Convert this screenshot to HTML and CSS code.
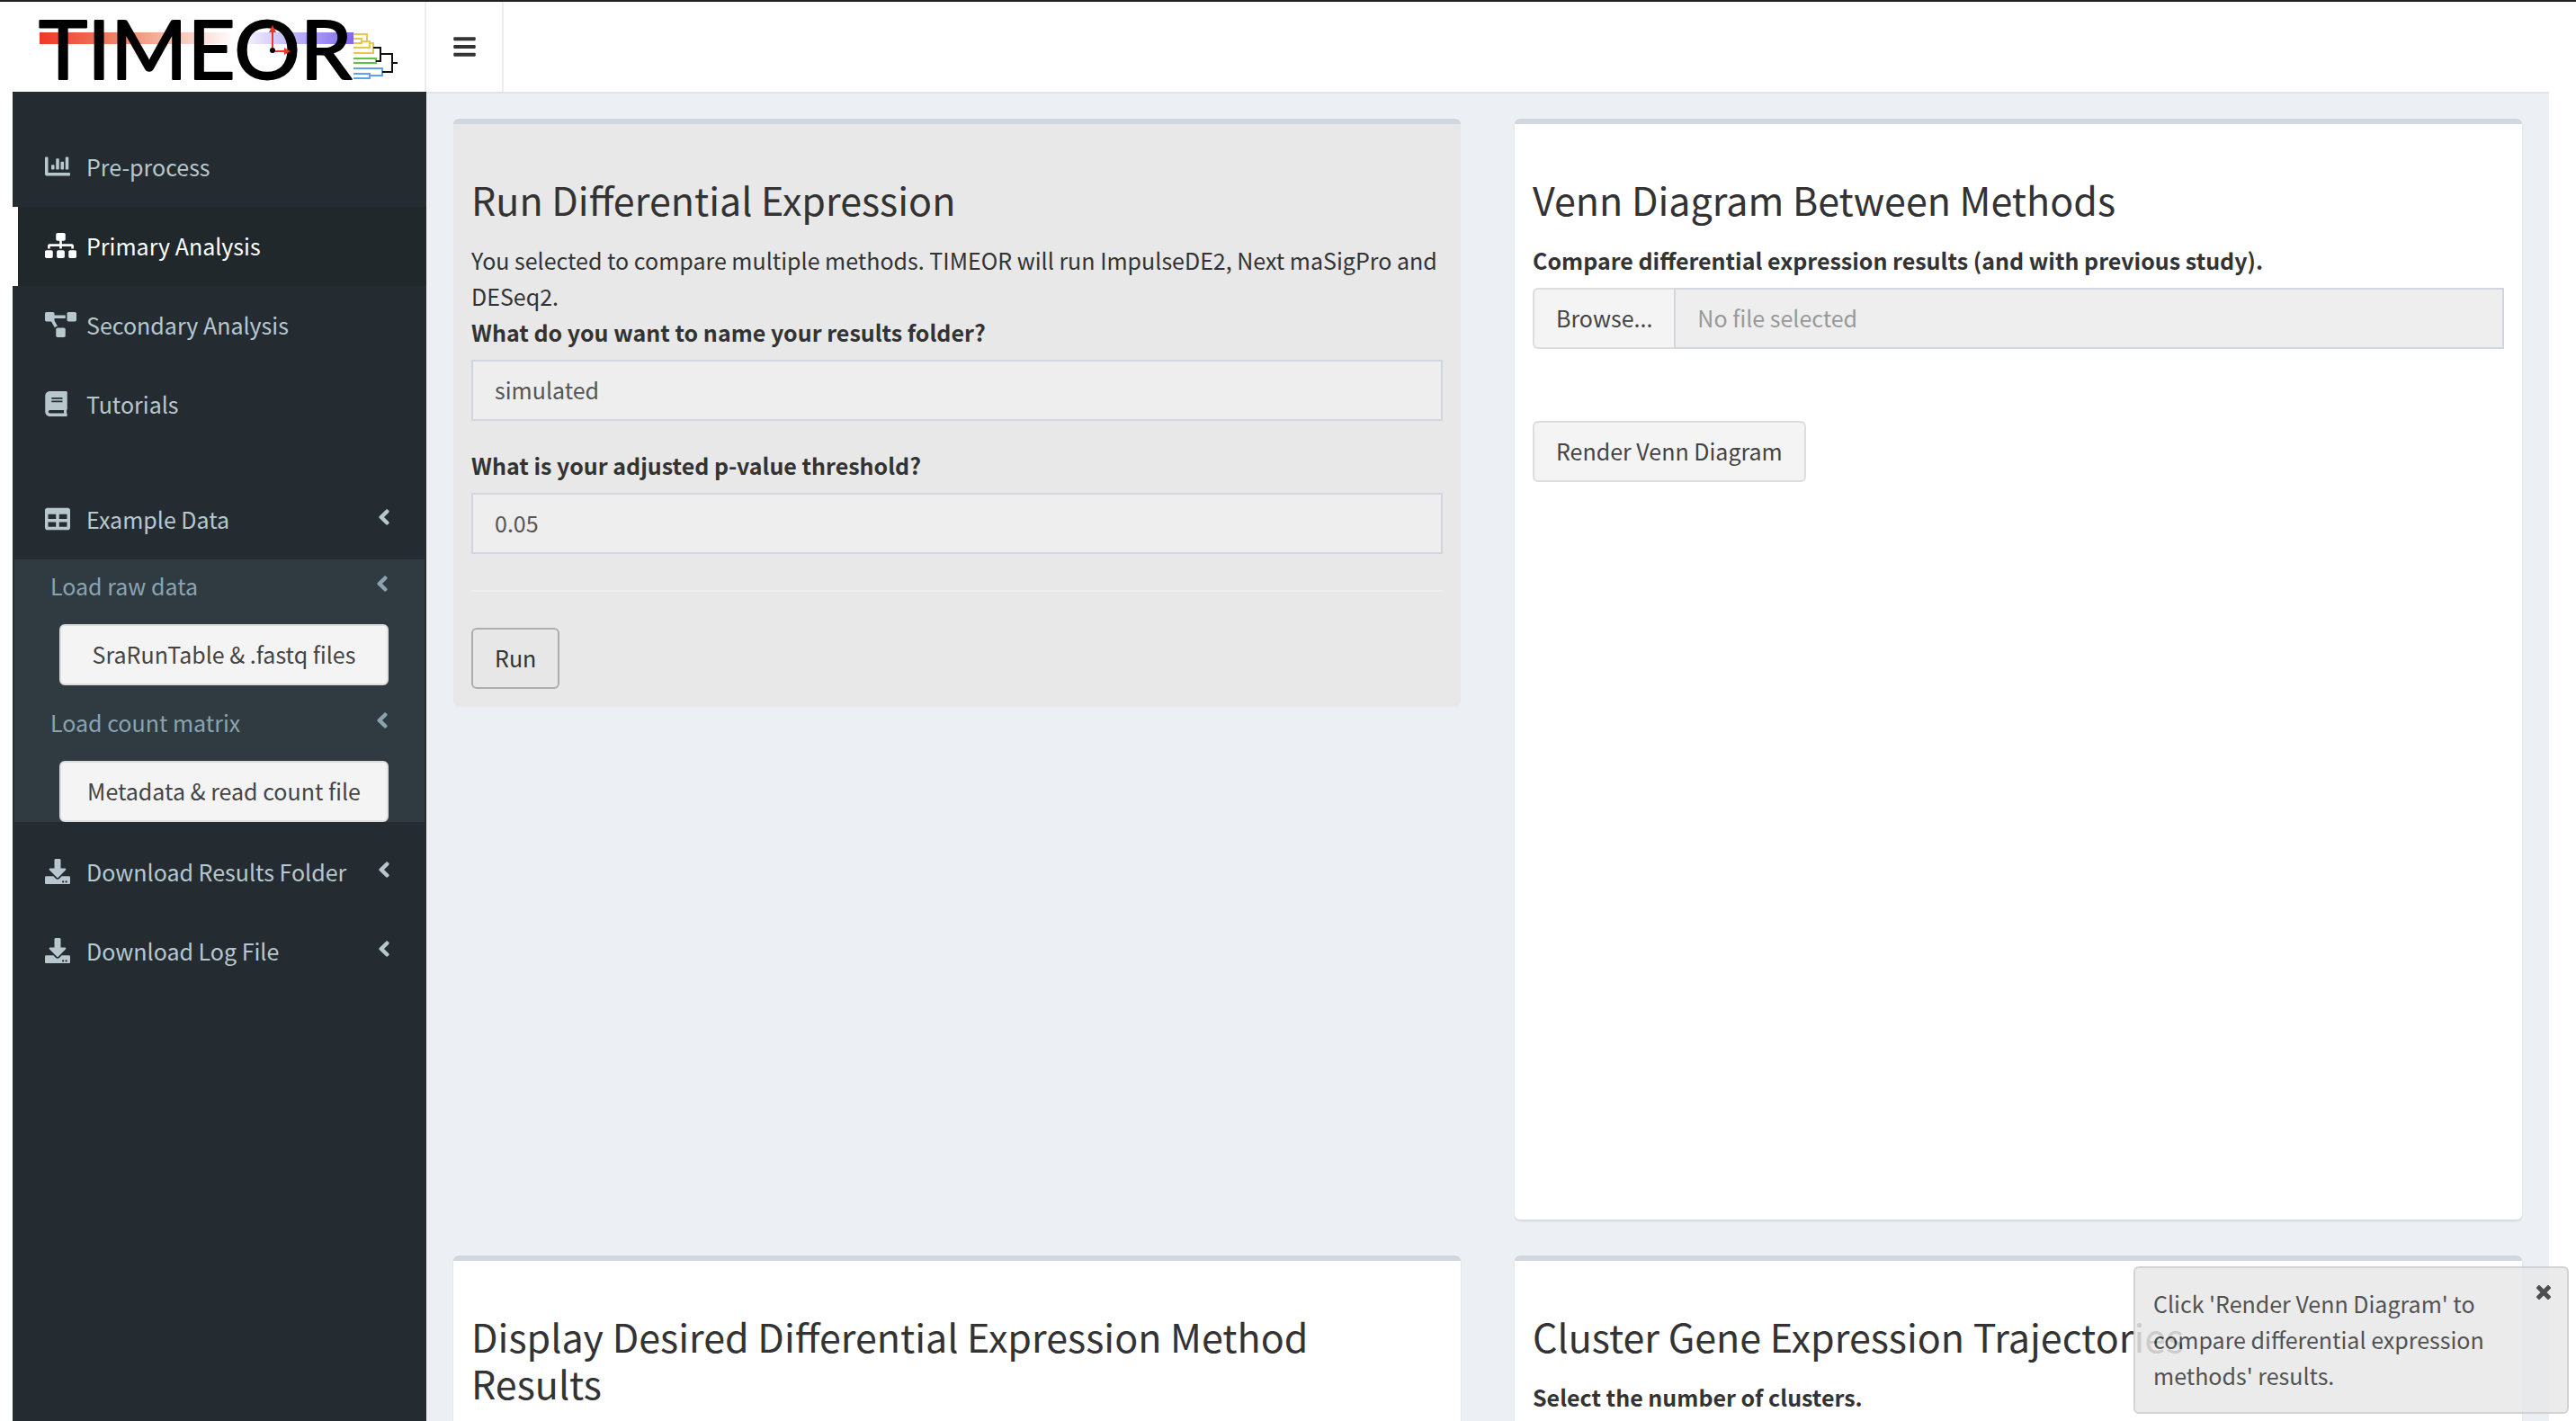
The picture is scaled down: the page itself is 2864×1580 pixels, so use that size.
FILE: index.html
```html
<!DOCTYPE html>
<html lang="en">
<head>
<meta charset="utf-8">
<title>TIMEOR</title>
<link rel="stylesheet" href="styles.css">
</head>
<body>
<svg class="sprite" aria-hidden="true">
  <symbol id="i-angle" viewBox="0 0 256 512"><path d="M31.7 239l136-136c9.4-9.4 24.6-9.4 33.9 0l22.6 22.6c9.4 9.4 9.4 24.6 0 33.9L127.9 256l96.4 96.4c9.4 9.4 9.4 24.6 0 33.9L201.7 409c-9.4 9.4-24.6 9.4-33.9 0l-136-136c-9.5-9.4-9.5-24.6-.1-34z"/></symbol>
  <symbol id="i-download" viewBox="0 0 512 512"><path d="M216 0h80c13.3 0 24 10.7 24 24v168h87.7c17.8 0 26.7 21.5 14.1 34.1L269.7 378.3c-7.5 7.5-19.8 7.5-27.3 0L90.1 226.1c-12.6-12.6-3.7-34.1 14.1-34.1H192V24c0-13.3 10.7-24 24-24zm296 376v112c0 13.3-10.7 24-24 24H24c-13.3 0-24-10.7-24-24V376c0-13.3 10.7-24 24-24h146.7l49 49c20.1 20.1 52.5 20.1 72.6 0l49-49H488c13.3 0 24 10.7 24 24zm-124 88c0-11-9-20-20-20s-20 9-20 20 9 20 20 20 20-9 20-20zm64 0c0-11-9-20-20-20s-20 9-20 20 9 20 20 20 20-9 20-20z"/></symbol>
</svg>

<header class="topbar">
  <a class="logo" href="#" aria-label="TIMEOR">
    <svg class="logo-art" viewBox="0 2 472 100">
      <defs>
        <linearGradient id="time" x1="0" x2="1" y1="0" y2="0">
          <stop offset="0" stop-color="#f03727"/>
          <stop offset=".25" stop-color="#ef8468"/>
          <stop offset=".62" stop-color="#ffffff"/>
          <stop offset="1" stop-color="#7f68ee"/>
        </linearGradient>
      </defs>
      <rect x="44" y="36" width="349" height="13" fill="url(#time)"/>
      <text class="logo-text" x="43" y="88">TIMEOR</text>
      <g fill="none" stroke="#f03727" stroke-width="2"><path d="M303 56V34M303 57H317"/></g>
      <path fill="#f03727" d="M303 28l4 8h-8zM323 57l-7-4v8z"/>
      <circle cx="303" cy="56" r="3"/>
      <g fill="none" stroke-width="2">
        <path stroke="#e6c84f" d="M393 38H408V46M393 43H402V48H393M402 46H411V53H393M411 48H415V59H393"/>
        <path stroke="#5fc441" d="M393 65H418V70H393"/>
        <path stroke="#62a0f5" d="M393 76H425V84H411M393 82H411V87H393"/>
        <path stroke="#111" d="M415 53H423V68H418M423 60H436V80H425M436 70H442"/>
      </g>
    </svg>
  </a>
  <button class="menu-toggle" type="button" aria-label="Toggle navigation">
    <svg class="icon icon-bars" viewBox="0 0 448 512"><path d="M16 132h416c8.8 0 16-7.2 16-16V76c0-8.800-7.200-16-16-16H16C7.200 60 0 67.200 0 76v40c0 8.800 7.200 16 16 16zm0 160h416c8.800 0 16-7.200 16-16v-40c0-8.800-7.200-16-16-16H16c-8.800 0-16 7.200-16 16v40c0 8.800 7.200 16 16 16zm0 160h416c8.800 0 16-7.200 16-16v-40c0-8.800-7.200-16-16-16H16c-8.800 0-16 7.200-16 16v40c0 8.800 7.200 16 16 16z"/></svg>
  </button>
</header>

<div class="shell">
  <nav class="sidebar">
    <a class="nav-item" href="#">
      <svg class="icon" viewBox="0 0 512 512"><path d="M332.8 320h38.4c6.4 0 12.8-6.4 12.8-12.8V172.8c0-6.4-6.4-12.8-12.8-12.8h-38.4c-6.4 0-12.8 6.4-12.8 12.8v134.4c0 6.4 6.4 12.8 12.8 12.8zm96 0h38.4c6.4 0 12.8-6.4 12.8-12.8V76.8c0-6.4-6.4-12.8-12.8-12.8h-38.4c-6.4 0-12.8 6.4-12.8 12.8v230.4c0 6.4 6.4 12.8 12.8 12.8zm-288 0h38.4c6.4 0 12.8-6.4 12.8-12.8v-70.4c0-6.4-6.4-12.8-12.8-12.8h-38.4c-6.4 0-12.8 6.4-12.8 12.8v70.4c0 6.4 6.4 12.8 12.8 12.8zm96 0h38.4c6.4 0 12.8-6.4 12.8-12.8V108.800c0-6.4-6.4-12.8-12.8-12.8h-38.4c-6.4 0-12.8 6.4-12.8 12.8v198.400c0 6.4 6.4 12.8 12.8 12.8zM496 384H64V80c0-8.840-7.160-16-16-16H16C7.160 64 0 71.160 0 80v336c0 17.670 14.330 32 32 32h464c8.840 0 16-7.160 16-16v-32c0-8.840-7.160-16-16-16z"/></svg>
      <span>Pre-process</span>
    </a>
    <a class="nav-item active" href="#" aria-current="page">
      <svg class="icon wide" viewBox="0 0 640 512"><path d="M128 352H32c-17.670 0-32 14.330-32 32v96c0 17.670 14.330 32 32 32h96c17.670 0 32-14.330 32-32v-96c0-17.670-14.330-32-32-32zm-24-80h192v48h48v-48h192v48h48v-57.590c0-21.170-17.230-38.410-38.410-38.410H344v-64h40c17.670 0 32-14.330 32-32V32c0-17.670-14.330-32-32-32H256c-17.670 0-32 14.330-32 32v96c0 17.670 14.330 32 32 32h40v64H94.410C73.230 224 56 241.230 56 262.410V320h48v-48zm264 80h-96c-17.670 0-32 14.330-32 32v96c0 17.670 14.330 32 32 32h96c17.670 0 32-14.330 32-32v-96c0-17.670-14.330-32-32-32zm240 0h-96c-17.670 0-32 14.330-32 32v96c0 17.670 14.330 32 32 32h96c17.670 0 32-14.330 32-32v-96c0-17.670-14.330-32-32-32z"/></svg>
      <span>Primary Analysis</span>
    </a>
    <a class="nav-item" href="#">
      <svg class="icon wide" viewBox="0 0 640 512"><path d="M384 320H256c-17.670 0-32 14.330-32 32v128c0 17.670 14.330 32 32 32h128c17.670 0 32-14.330 32-32V352c0-17.670-14.330-32-32-32zM192 32c0-17.670-14.330-32-32-32H32C14.330 0 0 14.330 0 32v128c0 17.670 14.330 32 32 32h95.720l73.160 128.040C211.980 300.980 232.400 288 256 288h.28L192 175.510V128h224V64H192V32zM608 0H480c-17.670 0-32 14.330-32 32v128c0 17.670 14.330 32 32 32h128c17.670 0 32-14.330 32-32V32c0-17.670-14.330-32-32-32z"/></svg>
      <span>Secondary Analysis</span>
    </a>
    <a class="nav-item" href="#">
      <svg class="icon narrow" viewBox="0 0 448 512"><path d="M448 360V24c0-13.3-10.7-24-24-24H96C43 0 0 43 0 96v320c0 53 43 96 96 96h328c13.3 0 24-10.7 24-24v-16c0-7.5-3.5-14.3-8.9-18.7-4.200-15.4-4.200-59.3 0-74.7 5.4-4.300 8.9-11.100 8.9-18.600zM128 134c0-3.300 2.700-6 6-6h212c3.300 0 6 2.700 6 6v20c0 3.300-2.700 6-6 6H134c-3.300 0-6-2.700-6-6v-20zm0 64c0-3.300 2.700-6 6-6h212c3.300 0 6 2.700 6 6v20c0 3.300-2.700 6-6 6H134c-3.300 0-6-2.700-6-6v-20zm253.400 250H96c-17.700 0-32-14.300-32-32 0-17.600 14.400-32 32-32h285.400c-1.900 17.100-1.900 46.900 0 64z"/></svg>
      <span>Tutorials</span>
    </a>
    <a class="nav-item spaced" href="#" aria-expanded="true">
      <svg class="icon" viewBox="0 0 512 512"><path d="M464 32H48C21.490 32 0 53.490 0 80v352c0 26.510 21.490 48 48 48h416c26.510 0 48-21.490 48-48V80c0-26.510-21.490-48-48-48zM224 416H64v-96h160v96zm0-160H64v-96h160v96zm224 160H288v-96h160v96zm0-160H288v-96h160v96z"/></svg>
      <span>Example Data</span>
      <svg class="angle"><use href="#i-angle"/></svg>
    </a>
    <div class="subnav">
      <a class="sub-item" href="#"><span>Load raw data</span><svg class="angle"><use href="#i-angle"/></svg></a>
      <button class="btn sub-btn" type="button">SraRunTable &amp; .fastq files</button>
      <a class="sub-item" href="#"><span>Load count matrix</span><svg class="angle"><use href="#i-angle"/></svg></a>
      <button class="btn sub-btn" type="button">Metadata &amp; read count file</button>
    </div>
    <a class="nav-item" href="#">
      <svg class="icon"><use href="#i-download"/></svg>
      <span>Download Results Folder</span>
      <svg class="angle"><use href="#i-angle"/></svg>
    </a>
    <a class="nav-item" href="#">
      <svg class="icon"><use href="#i-download"/></svg>
      <span>Download Log File</span>
      <svg class="angle"><use href="#i-angle"/></svg>
    </a>
  </nav>

  <main class="content">
    <section class="card muted">
      <h3>Run Differential Expression</h3>
      <p>You selected to compare multiple methods. TIMEOR will run ImpulseDE2, Next maSigPro and DESeq2.</p>
      <label for="folder">What do you want to name your results folder?</label>
      <input class="field" id="folder" type="text" value="simulated">
      <label for="pvalue" class="next">What is your adjusted p-value threshold?</label>
      <input class="field" id="pvalue" type="text" value="0.05">
      <hr>
      <button class="btn run" type="button">Run</button>
    </section>

    <section class="card">
      <h3>Venn Diagram Between Methods</h3>
      <label for="study">Compare differential expression results (and with previous study).</label>
      <div class="file-group">
        <button class="btn browse" type="button">Browse...</button>
        <input class="field" id="study" type="text" placeholder="No file selected" readonly>
      </div>
      <button class="btn render" type="button">Render Venn Diagram</button>
      <div class="plot"></div>
    </section>

    <section class="card tall">
      <h3>Display Desired Differential Expression Method Results</h3>
    </section>

    <section class="card tall">
      <h3>Cluster Gene Expression Trajectories</h3>
      <p class="strong">Select the number of clusters.</p>
    </section>
  </main>
</div>

<div class="toast" role="status">
  <p>Click 'Render Venn Diagram' to compare differential expression methods' results.</p>
  <button class="close" type="button" aria-label="Close">
    <svg viewBox="0 0 16 16"><path d="M3 3l10 10M13 3L3 13"/></svg>
  </button>
</div>
</body>
</html>
```
FILE: styles.css
```css
* { box-sizing: border-box; }

body {
  display: flex;
  flex-direction: column;
  height: 100vh;
  margin: 0;
  overflow: hidden;
  border-top: 2px solid #252225;
  background: #fff;
  color: #333;
  font: 25px/40px "Source Sans Pro", "Noto Sans CJK SC", sans-serif;
}

h3, p, hr { margin: 0; }
a { color: inherit; text-decoration: none; }
button, input { font: inherit; }

.sprite { display: none; }
.icon { flex: none; width: 28px; height: 28px; fill: currentColor; }
.icon.wide { width: 35px; }
.icon.narrow, .icon-bars { width: 25px; }
.angle { width: 14px; height: 28px; margin: 0 0 4px auto; fill: currentColor; }

/* Header */
.topbar { display: flex; flex: none; height: 100px; }
.logo { width: 474px; border-right: 2px solid #eee; }
.logo-art { display: block; width: 472px; height: 100px; overflow: visible; }
.logo-text { font-family: Lato, sans-serif; font-size: 92px; fill: #000; stroke: #000; stroke-width: 2px; stroke-linejoin: round; }
.menu-toggle {
  display: flex;
  align-items: center;
  padding: 0 29px 0 30px;
  border: 0;
  border-right: 2px solid #eee;
  background: none;
  color: #333;
}

/* Sidebar */
.shell { display: flex; flex: 1; min-height: 0; padding: 0 30px 0 14px; }
.sidebar { flex: none; width: 460px; padding-top: 40px; background: #242c32; color: #b8c7ce; }
.nav-item {
  display: flex;
  align-items: center;
  height: 88px;
  padding: 0 40px 2px 30px;
  border-left: 6px solid transparent;
}
.nav-item .icon + span { margin-left: 18px; }
.nav-item .wide + span { margin-left: 11px; }
.nav-item .narrow + span { margin-left: 21px; }
.nav-item.active { border-color: #fff; background: #20282b; color: #fff; }
.nav-item.spaced { margin-top: 40px; }
.subnav { display: grid; gap: 12px; margin: 0 2px 12px; background: #303a41; color: #8aa4af; }
.sub-item { display: flex; align-items: center; height: 60px; padding: 0 40px 2px; }
.sub-btn { margin: 0 40px 0 50px; }

.btn {
  height: 68px;
  padding: 0 24px 2px;
  border: 2px solid #ddd;
  border-radius: 6px;
  background: #f4f4f4;
  color: #444;
}
.btn.sub-btn { padding: 0 0 2px; }

/* Content */
.content {
  display: grid;
  flex: 1;
  grid-template-columns: 1fr 1fr;
  gap: 40px 60px;
  align-content: start;
  align-items: start;
  padding: 28px 30px;
  overflow-y: auto;
  scrollbar-width: none;
  border-top: 2px solid #e1e5eb;
  background: #ecf0f5;
}
.card {
  min-width: 0;
  padding: 57px 20px 20px;
  border-top: 6px solid #d2d6de;
  border-radius: 6px;
  background: #fff;
  box-shadow: 0 2px 2px rgba(0, 0, 0, .1);
}
.card.muted { background: #e8e8e8; box-shadow: none; }
.card.tall { min-height: 400px; }
.card h3 { margin-bottom: 22px; font-size: 43px; font-weight: 400; line-height: 52px; }
.card label, .strong { display: block; font-weight: 700; }
.card .next { margin-top: 29px; }
.field {
  display: block;
  width: 100%;
  height: 68px;
  margin-top: 11px;
  padding: 0 24px 2px;
  border: 2px solid #d2d6de;
  border-radius: 0;
  background: #eee;
  color: #555;
}
.field::placeholder { color: #999; opacity: 1; }
.card hr { margin: 40px 0; border: 0; border-top: 2px solid #eee; }
.btn.run { display: block; border-color: #adadad; background: #e7e7e7; color: #333; }
.file-group { display: flex; margin-top: 11px; }
.file-group .field { flex: 1; margin: 0; }
.btn.browse { flex: none; border-right: 0; border-radius: 6px 0 0 6px; }
.btn.render { display: block; margin-top: 80px; }
.plot { height: 800px; }

/* Notification */
.toast {
  position: fixed;
  right: 8px;
  bottom: 8px;
  display: flex;
  width: 484px;
  padding: 19px 18px 21px 20px;
  border: 2px solid #ccc;
  border-radius: 6px;
  background: #e8e8e8;
  color: #333;
  opacity: .85;
}
.toast p { flex: 1; }
.close {
  align-self: flex-start;
  width: 16px;
  height: 16px;
  padding: 0;
  border: 0;
  background: none;
}
.close svg { display: block; fill: none; stroke: #333; stroke-width: 5px; stroke-linecap: square; }
```
